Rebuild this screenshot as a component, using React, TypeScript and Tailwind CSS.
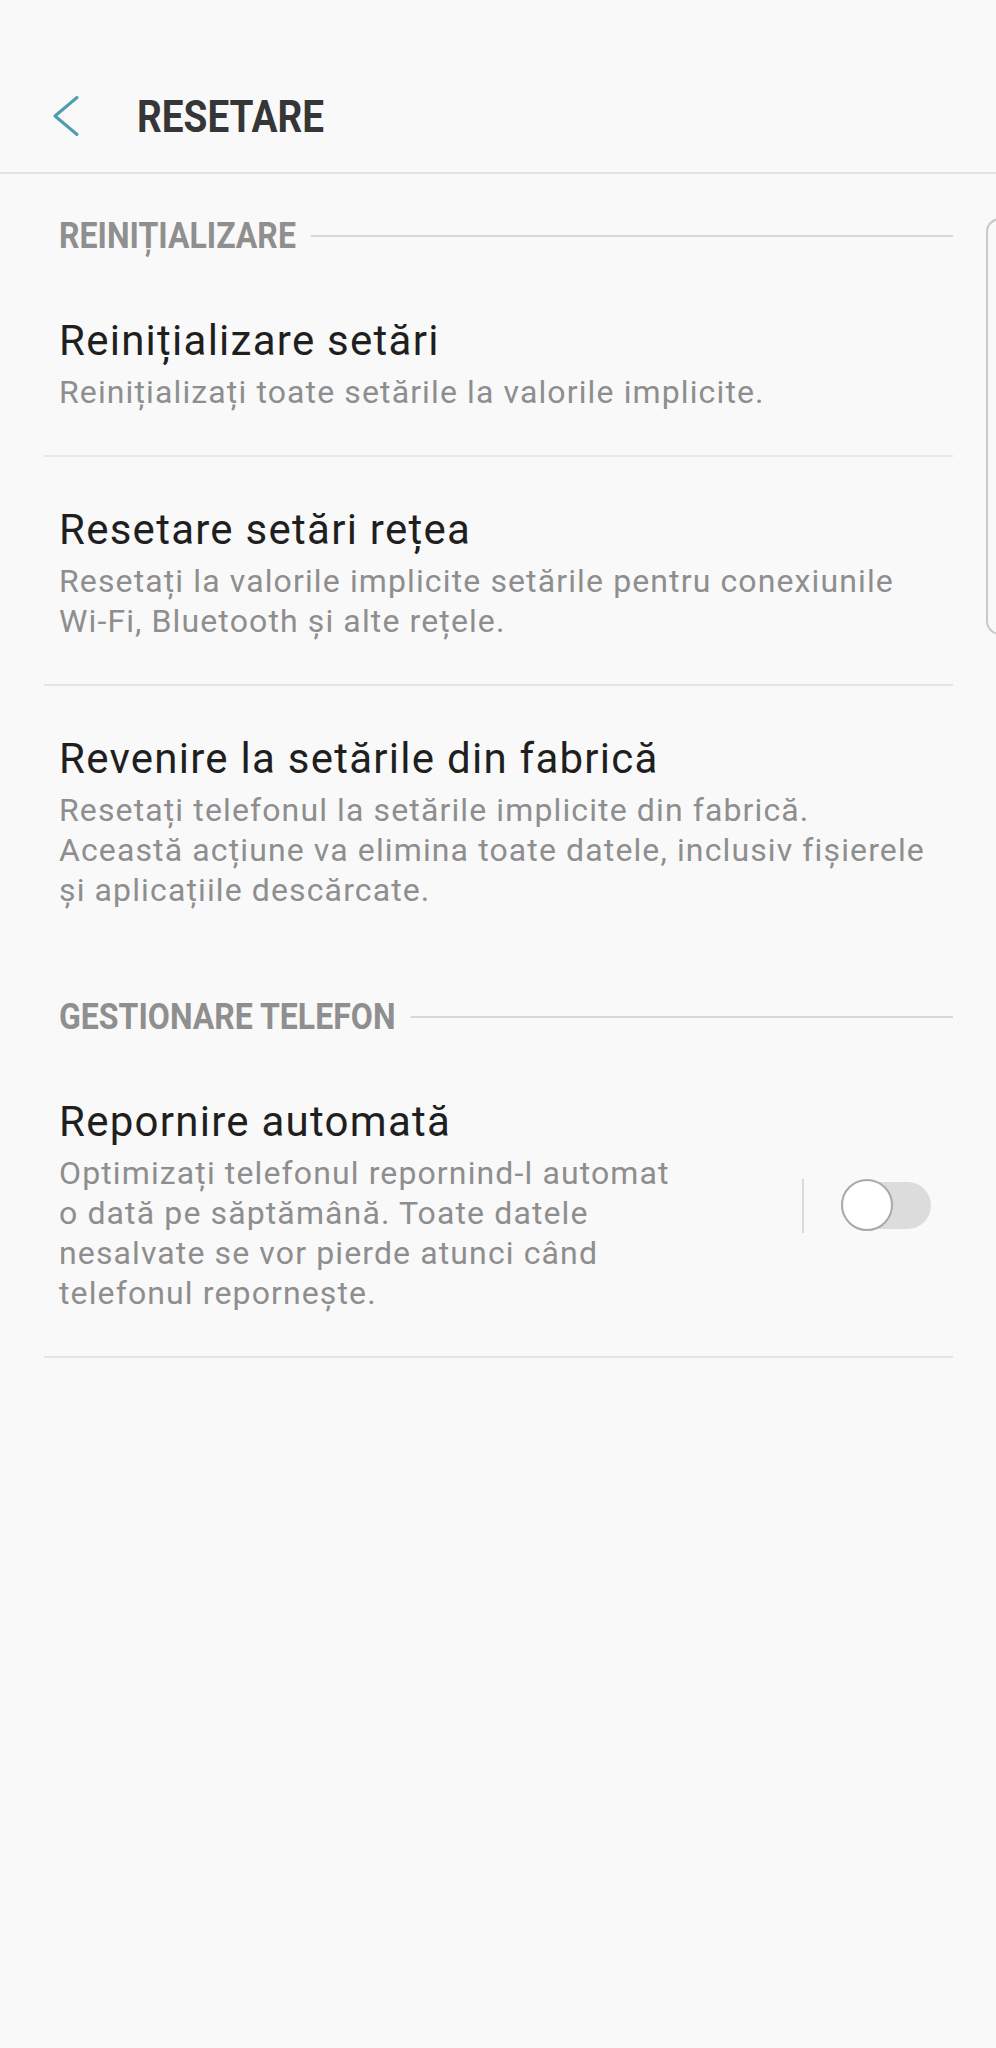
import type { FC, ReactNode } from "react";

type SettingItemProps = {
    title: string;
    lines: string[];
    first?: boolean;
    divider?: boolean;
    right?: ReactNode;
};

const font = { fontFamily: "Roboto, 'Noto Sans', sans-serif" };

// condensed bold label; the rule runs behind it as a centred background line
const SectionHeader: FC<{ label: string }> = ({ label }) => (
    <div className="mt-[40px] ml-[15px] flex h-[44px] items-center bg-[linear-gradient(#d8d8d8,#d8d8d8)] bg-[length:100%_2px] bg-center bg-no-repeat">
        <span className="inline-block origin-left scale-x-[0.89] whitespace-nowrap bg-[#f9f9f9] pr-[17px] text-[36px] font-bold leading-[44px] text-[#8f8f8f]">
            {label}
        </span>
    </div>
);

const SettingItem: FC<SettingItemProps> = ({ title, lines, first, divider, right }) => (
    <div
        className={`flex items-center pl-[15px] ${first ? "pt-[59px]" : "pt-[49px]"} ${
            divider ? "border-b-2 border-[#e6e6e6] pb-[43px]" : "pb-[45px]"
        }`}
    >
        <div className="flex-1">
            <div className="whitespace-nowrap text-[42px] leading-[48px] tracking-[0.03em] text-[#1f1f1f]">{title}</div>
            <div className="mt-[7px] text-[32px] leading-[40px] tracking-[0.035em] text-[#8e8e8e]">
                {lines.map((line) => (
                    <div key={line} className="whitespace-nowrap">
                        {line}
                    </div>
                ))}
            </div>
        </div>
        {right}
    </div>
);

const Toggle: FC = () => (
    <div className="flex items-center pr-[22px]">
        <div className="h-[54px] w-[2px] bg-[#dadada]" />
        <div className="relative ml-[37px] h-[47px] w-[90px] rounded-full bg-[#dcdcdc]">
            <div className="absolute -top-[3px] left-0 h-[52px] w-[52px] rounded-full border-2 border-[#a9a9a9] bg-white" />
        </div>
    </div>
);

export default function App() {
    return (
        <div className="relative min-h-[2048px] w-[996px] bg-[#f9f9f9]" style={font}>
            <header className="flex h-[174px] items-center border-b-2 border-[#e3e3e3] pt-[60px]">
                <svg className="ml-[52px]" width="28" height="42" viewBox="0 0 28 42" fill="none">
                    <path d="M25 2.5 L3 21 L25 39.5" stroke="#4f9db1" strokeWidth="3" strokeLinecap="round" strokeLinejoin="round" />
                </svg>
                <h1 className="ml-[57px] origin-left scale-x-[0.86] text-[45px] font-bold leading-none text-[#363636]">RESETARE</h1>
            </header>

            <main className="pl-[44px] pr-[43px]">
                <SectionHeader label="REINIȚIALIZARE" />
                <SettingItem
                    first
                    divider
                    title="Reinițializare setări"
                    lines={["Reinițializați toate setările la valorile implicite."]}
                />
                <SettingItem
                    divider
                    title="Resetare setări rețea"
                    lines={["Resetați la valorile implicite setările pentru conexiunile", "Wi-Fi, Bluetooth și alte rețele."]}
                />
                <SettingItem
                    title="Revenire la setările din fabrică"
                    lines={[
                        "Resetați telefonul la setările implicite din fabrică.",
                        "Această acțiune va elimina toate datele, inclusiv fișierele",
                        "și aplicațiile descărcate.",
                    ]}
                />

                <SectionHeader label="GESTIONARE TELEFON" />
                <SettingItem
                    first
                    divider
                    title="Repornire automată"
                    lines={[
                        "Optimizați telefonul repornind-l automat",
                        "o dată pe săptămână. Toate datele",
                        "nesalvate se vor pierde atunci când",
                        "telefonul repornește.",
                    ]}
                    right={<Toggle />}
                />
            </main>

            {/* edge panel handle */}
            <div className="absolute left-[986px] top-[218px] h-[417px] w-[20px] rounded-l-[14px] border-y-2 border-l-2 border-[#c9c9c9]" />
        </div>
    );
}
